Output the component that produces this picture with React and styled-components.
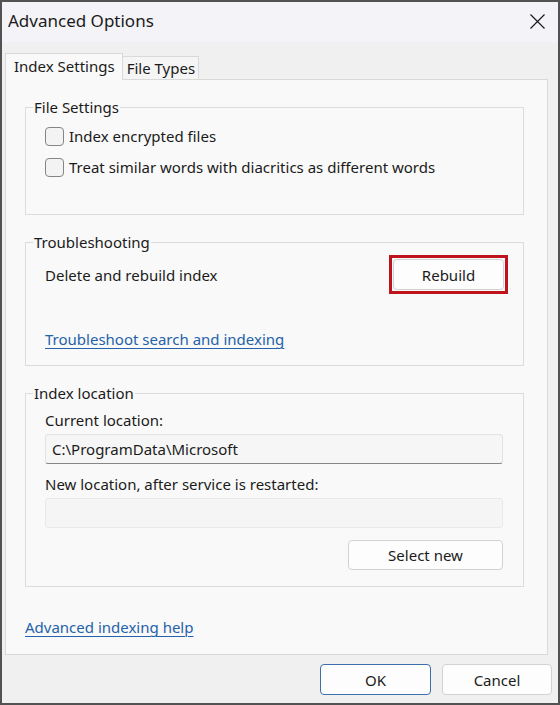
import React from "react";
import styled, { createGlobalStyle } from "styled-components";

const Global = createGlobalStyle`
  html, body { margin: 0; padding: 0; background: #ffffff; }
  * { box-sizing: border-box; }
  body { font-family: "Noto Sans", "Open Sans", sans-serif; color: #1b1b1b; }
`;

const Window = styled.div`
  width: 560px;
  height: 705px;
  border: 2px solid #525252;
  display: flex;
  flex-direction: column;
  background: #f0f0f0;
`;

const TitleBar = styled.div`
  height: 40px;
  flex: none;
  background: #f3f3f8;
  display: flex;
  align-items: center;
  justify-content: space-between;
  padding: 0 13px 2px 6px;
`;

const Title = styled.div`
  font-size: 17px;
  line-height: 22px;
  color: #1b1b1b;
`;

const CloseBtn = styled.div`
  width: 15px;
  height: 15px;
  display: flex;
`;

const Body = styled.div`
  flex: 1;
  display: flex;
  flex-direction: column;
  padding: 11px 10px 0 3px;
  min-height: 0;
`;

const TabStrip = styled.div`
  display: flex;
  align-items: flex-end;
  height: 27px;
  margin-bottom: -1px;
  position: relative;
  z-index: 1;
`;

const Tab = styled.div`
  height: ${(p) => (p.$active ? "27px" : "24px")};
  padding: ${(p) => (p.$active ? "0 7px 0 8px" : "0 3px 0 4px")};
  background: ${(p) => (p.$active ? "#f9f9f9" : "#f5f5f5")};
  border: 1px solid #d9d9d9;
  border-bottom: ${(p) => (p.$active ? "none" : "1px solid #d9d9d9")};
  border-left: ${(p) => (p.$active ? "1px solid #d9d9d9" : "none")};
  font-size: 15px;
  line-height: ${(p) => (p.$active ? "24px" : "22px")};
  color: #1b1b1b;
  white-space: nowrap;
`;

const Pane = styled.div`
  flex: 1;
  background: #f9f9f9;
  border: 1px solid #d9d9d9;
  padding: 17px 23px 0 19px;
  display: flex;
  flex-direction: column;
  gap: 17px;
`;

const Group = styled.fieldset`
  margin: 0;
  padding: 0;
  border: 1px solid #dcdcdc;
  min-width: 0;
`;

const Legend = styled.legend`
  margin-left: 7px;
  padding: 0 1px;
  font-size: 15px;
  line-height: 20px;
  color: #1b1b1b;
`;

const GroupBody = styled.div`
  display: flex;
  flex-direction: column;
  padding: 7px 20px ${(p) => p.$bottom || 16}px 19px;
  gap: ${(p) => p.$gap || 0}px;
`;

const CheckRow = styled.label`
  display: flex;
  align-items: center;
  gap: 5px;
  height: 24px;
  font-size: 15px;
  color: #1b1b1b;
`;

const CheckBox = styled.span`
  width: 19px;
  height: 19px;
  border: 1px solid #858585;
  border-radius: 4px;
  background: #f3f3f3;
  flex: none;
`;

const Row = styled.div`
  display: flex;
  align-items: center;
  justify-content: space-between;
  height: 31px;
`;

const Text = styled.div`
  font-size: 15px;
  line-height: 20px;
  color: #1b1b1b;
  margin-top: ${(p) => p.$mt || 0}px;
`;

const Link = styled.a`
  font-size: 15px;
  line-height: 20px;
  color: #2462aa;
  text-decoration: underline;
  text-underline-offset: 3px;
  text-decoration-thickness: 1px;
  align-self: flex-start;
  margin-top: ${(p) => p.$mt || 0}px;
  cursor: pointer;
`;

const HighlightFrame = styled.span`
  display: flex;
  border: 3px solid #c0141c;
  padding: 1px;
  margin: -4px -5px -4px 0;
`;

const Button = styled.button`
  width: ${(p) => p.$w}px;
  height: ${(p) => p.$h || 31}px;
  background: #fdfdfd;
  border: 1px solid ${(p) => (p.$primary ? "#3b6fae" : "#d2d2d2")};
  border-radius: 4px;
  font-family: "Noto Sans", "Open Sans", sans-serif;
  font-size: 15px;
  color: #1b1b1b;
  padding: 0;
  flex: none;
  align-self: ${(p) => p.$align || "auto"};
  margin-top: ${(p) => p.$mt || 0}px;
`;

const TextBox = styled.div`
  height: 30px;
  margin-top: 4px;
  background: ${(p) => (p.$disabled ? "#f5f5f5" : "#f6f6f6")};
  border: 1px solid ${(p) => (p.$disabled ? "#e9e9e9" : "#e3e3e3")};
  border-bottom: 1px solid ${(p) => (p.$disabled ? "#e9e9e9" : "#878787")};
  border-radius: 3px;
  padding-left: 6px;
  font-size: 15px;
  line-height: 28px;
  color: #1b1b1b;
`;

const Footer = styled.div`
  height: 48px;
  flex: none;
  display: flex;
  align-items: center;
  justify-content: flex-end;
  gap: 11px;
  padding: 1px 6px 0 0;
`;

export default function App() {
  return (
    <>
      <Global />
      <Window>
        <TitleBar>
          <Title>Advanced Options</Title>
          <CloseBtn>
            <svg width="15" height="15" viewBox="0 0 15 15">
              <path d="M0.5 0.5 L14.5 14.5 M14.5 0.5 L0.5 14.5" stroke="#1b1b1b" strokeWidth="1.2" fill="none" />
            </svg>
          </CloseBtn>
        </TitleBar>
        <Body>
          <TabStrip>
            <Tab $active>Index Settings</Tab>
            <Tab>File Types</Tab>
          </TabStrip>
          <Pane>
            <Group>
              <Legend>File Settings</Legend>
              <GroupBody $gap={7} $bottom={35}>
                <CheckRow>
                  <CheckBox />
                  Index encrypted files
                </CheckRow>
                <CheckRow>
                  <CheckBox />
                  Treat similar words with diacritics as different words
                </CheckRow>
              </GroupBody>
            </Group>
            <Group>
              <Legend>Troubleshooting</Legend>
              <GroupBody>
                <Row>
                  <Text>Delete and rebuild index</Text>
                  <HighlightFrame>
                    <Button $w={111}>Rebuild</Button>
                  </HighlightFrame>
                </Row>
                <Link $mt={39}>Troubleshoot search and indexing</Link>
              </GroupBody>
            </Group>
            <Group>
              <Legend>Index location</Legend>
              <GroupBody>
                <Text>Current location:</Text>
                <TextBox>C:\ProgramData\Microsoft</TextBox>
                <Text $mt={10}>New location, after service is restarted:</Text>
                <TextBox $disabled />
                <Button $w={155} $h={30} $align="flex-end" $mt={12}>Select new</Button>
              </GroupBody>
            </Group>
            <Link $mt={13}>Advanced indexing help</Link>
          </Pane>
        </Body>
        <Footer>
          <Button $w={111} $primary>OK</Button>
          <Button $w={110}>Cancel</Button>
        </Footer>
      </Window>
    </>
  );
}
